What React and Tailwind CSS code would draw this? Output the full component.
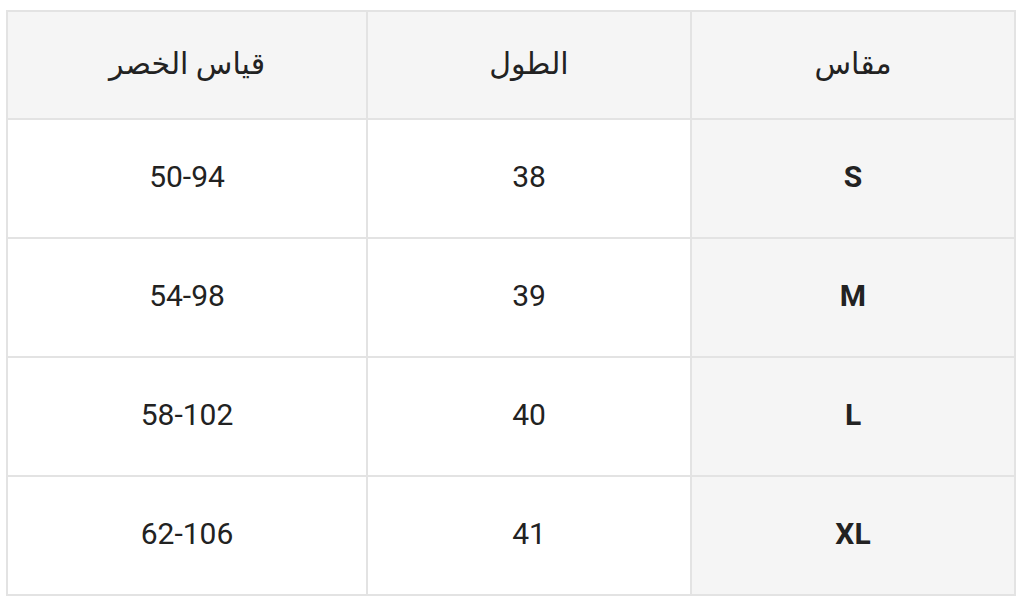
import React from "react";

const rows = [
  { size: "S", length: "38", waist: "50-94" },
  { size: "M", length: "39", waist: "54-98" },
  { size: "L", length: "40", waist: "58-102" },
  { size: "XL", length: "41", waist: "62-106" },
];

const App = () => {
  return (
    <div className="min-h-screen bg-white pt-[10px] pl-[6px] font-['Roboto','Noto_Sans','DejaVu_Sans',sans-serif]">
      <table dir="rtl" className="w-[1010px] border-collapse border-2 border-[#e3e3e3] text-[30px] text-[#222]">
        <thead>
          <tr className="h-[108px] bg-[#f5f5f5]">
            <th className="w-[324px] border-2 border-[#e3e3e3] pb-[4px] font-medium">مقاس</th>
            <th className="w-[324px] border-2 border-[#e3e3e3] pb-[4px] font-medium">الطول</th>
            <th className="border-2 border-[#e3e3e3] pb-[4px] font-medium">قياس الخصر</th>
          </tr>
        </thead>
        <tbody>
          {rows.map((row) => (
            <tr key={row.size} className="h-[119px]">
              <td className="border-2 border-[#e3e3e3] bg-[#f5f5f5] pb-[4px] text-center font-bold">{row.size}</td>
              <td className="border-2 border-[#e3e3e3] pb-[4px] text-center">{row.length}</td>
              <td className="border-2 border-[#e3e3e3] pb-[4px] text-center">{row.waist}</td>
            </tr>
          ))}
        </tbody>
      </table>
    </div>
  );
};

export default App;
